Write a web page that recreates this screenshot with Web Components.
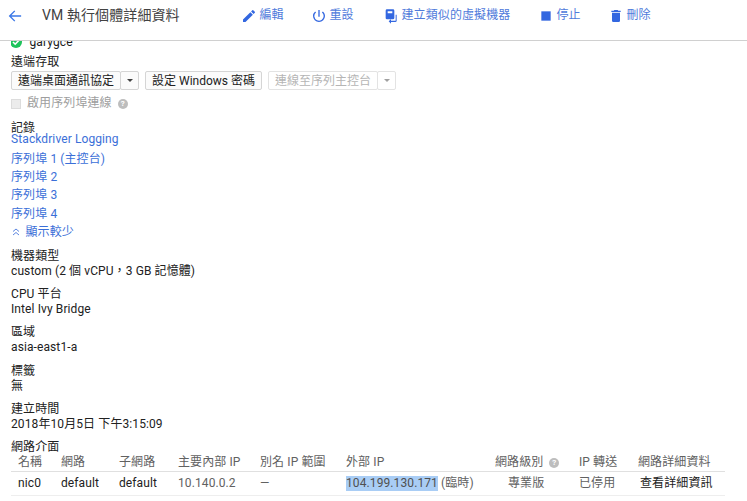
<!DOCTYPE html>
<html>
<head>
<meta charset="utf-8">
<style>
  html, body { margin: 0; padding: 0; height: 100%; background: #fff; }
  body { font: 12px/15px Roboto, "Noto Sans CJK TC", sans-serif; letter-spacing: .1px; color: #212121; overflow: hidden; }
</style>
</head>
<body>
<vm-header>
  <action-link icon="edit" style="width:70px">編輯</action-link>
  <action-link icon="reset" style="width:72px">重設</action-link>
  <action-link icon="clone" style="width:155px">建立類似的虛擬機器</action-link>
  <action-link icon="stop" style="width:70px">停止</action-link>
  <action-link icon="trash">刪除</action-link>
</vm-header>
<vm-details></vm-details>

<script>
const ICONS = {
  edit: '<path d="M3 17.25V21h3.75L17.81 9.94l-3.75-3.75L3 17.25zM20.71 7.04a1 1 0 0 0 0-1.41l-2.34-2.34a1 1 0 0 0-1.41 0l-1.83 1.83 3.75 3.75 1.83-1.83z"/>',
  reset: '<path d="M13 3h-2v10h2V3zm4.83 2.17-1.42 1.42A6.92 6.92 0 0 1 19 12a7 7 0 1 1-11.42-5.42L6.17 5.17A8.96 8.96 0 0 0 3 12a9 9 0 0 0 18 0c0-2.74-1.23-5.19-3.17-6.83z"/>',
  clone: '<path d="M6 2h9a2 2 0 0 1 2 2v11a2 2 0 0 1-2 2H6a2 2 0 0 1-2-2V4a2 2 0 0 1 2-2zm1 3v3h7V5H7zm12 5h1.5v9a2 2 0 0 1-2 2H12v2.5L8.5 20 12 17v2h7v-9z"/>',
  stop: '<path d="M5 5h14v14H5z"/>',
  trash: '<path d="M6 19a2 2 0 0 0 2 2h8a2 2 0 0 0 2-2V7H6v12zM19 4h-3.5l-1-1h-5l-1 1H5v2h14V4z"/>'
};

class ActionLink extends HTMLElement {
  constructor() {
    super();
    this.attachShadow({ mode: 'open' }).innerHTML = `
      <style>
        :host { display: flex; align-items: center; gap: 2.5px; color: #4f7bdb; font-size: 12px; white-space: nowrap; flex: none; box-sizing: border-box; }
        svg { width: 16px; height: 16px; fill: #3367e0; flex: none; }
      </style>
      <svg viewBox="0 0 24 24">${ICONS[this.getAttribute('icon')]}</svg>
      <slot></slot>`;
  }
}

class VmHeader extends HTMLElement {
  constructor() {
    super();
    this.attachShadow({ mode: 'open' }).innerHTML = `
      <style>
        :host { display: flex; align-items: center; height: 41px; box-sizing: border-box; border-bottom: 1px solid #d0d0d0; padding-bottom: 9px; }
        svg { width: 14px; height: 14px; margin-left: 8px; fill: #3b78e7; flex: none; }
        h1 { margin: 0 0 0 20px; width: 199px; font-size: 14px; font-weight: 400; color: #424242; white-space: nowrap; flex: none; }
        .actions { display: flex; align-items: center; }
      </style>
      <svg viewBox="0 0 16 16"><path d="M15 7.2H3.9l4.4-4.5-1.1-1.1L.8 8l6.4 6.4 1.1-1.1-4.4-4.5H15z"/></svg>
      <h1>VM 執行個體詳細資料</h1>
      <div class="actions"><slot></slot></div>`;
  }
}

class GcpButton extends HTMLElement {
  constructor() {
    super();
    this.attachShadow({ mode: 'open' }).innerHTML = `
      <style>
        :host { display: inline-flex; align-items: center; justify-content: center; height: 19px; box-sizing: border-box; border: 1px solid #d5d5d5; border-radius: 2px; background: #fbfbfb; color: #212121; font-size: 12px; letter-spacing: 0; white-space: nowrap; padding: 1px 6px 0; }
        :host([disabled]) { color: #b5b5b5; border-color: #e3e3e3; background: #fff; }
        :host([arrow]) { width: 19px; padding: 0; }
        i { border: 3px solid transparent; border-top-color: #424242; border-bottom: 0; }
        :host([disabled]) i { border-top-color: #a0a0a0; }
      </style>
      <slot></slot>${this.hasAttribute('arrow') ? '<i></i>' : ''}`;
  }
}

class DetailBlock extends HTMLElement {
  constructor() {
    super();
    this.attachShadow({ mode: 'open' }).innerHTML = `
      <style>
        :host { display: block; }
        .label { display: block; color: #212121; }
      </style>
      <span class="label">${this.getAttribute('label')}</span>
      <slot></slot>`;
  }
}

class HelpIcon extends HTMLElement {
  constructor() {
    super();
    this.attachShadow({ mode: 'open' }).innerHTML = `
      <style>
        :host { display: inline-block; width: 10px; height: 10px; border-radius: 50%; background: #bdbdbd; color: #fff; font: bold 8px/10px Roboto, sans-serif; text-align: center; }
      </style>?`;
  }
}

class VmDetails extends HTMLElement {
  constructor() {
    super();
    const logs = ['序列埠 1 (主控台)', '序列埠 2', '序列埠 3', '序列埠 4']
      .map(t => `<a>${t}</a>`).join('');
    this.attachShadow({ mode: 'open' }).innerHTML = `
      <style>
        :host { display: block; padding: 0 11px; height: 460px; overflow: hidden; }
        a { display: block; color: #3b6fd8; height: 18.4px; line-height: 18px; }
        .name { display: flex; align-items: flex-end; gap: 7.5px; height: 9px; overflow: hidden; margin-bottom: 4.5px; }
        .name span { flex: none; line-height: 15px; }
        .name svg { width: 12px; height: 12px; flex: none; margin: 0 0 2px -1px; }
        .buttons { display: flex; gap: 6px; margin-top: 1.5px; }
        .split { display: flex; }
        .split gcp-button + gcp-button { margin-left: -1px; }
        .serial { display: flex; align-items: center; gap: 6px; color: #9e9e9e; margin-top: 6px; height: 15px; }
        .serial b { width: 10px; height: 10px; background: #ececec; border: 1px solid #dcdcdc; box-sizing: border-box; }
        .logs { margin-top: 10.5px; }
        .log-label { height: 12px; line-height: 12px; }
        .logs a.first { margin-top: -1px; height: 17px; line-height: 12px; }
        .less { display: flex; align-items: center; gap: 5.5px; }
        .less svg { width: 8px; height: 8px; stroke: #5c86e0; fill: none; margin-left: 1px; }
        detail-block { margin-top: 8.2px; }
        .logs + detail-block { margin-top: 7.5px; }
        .nets { margin-right: 11px; }
      </style>
      <div class="name">
        <svg viewBox="0 0 12 12"><circle cx="6" cy="6" r="6" fill="#1fc35c"/><path d="M3 6l2.2 2.2L9.2 4" fill="none" stroke="#fff" stroke-width="1.6"/></svg>
        <span>garygce</span>
      </div>
      <div>遠端存取</div>
      <div class="buttons">
        <div class="split"><gcp-button>遠端桌面通訊協定</gcp-button><gcp-button arrow></gcp-button></div>
        <gcp-button>設定 Windows 密碼</gcp-button>
        <div class="split"><gcp-button disabled>連線至序列主控台</gcp-button><gcp-button disabled arrow></gcp-button></div>
      </div>
      <div class="serial"><b></b>啟用序列埠連線<help-icon></help-icon></div>
      <div class="logs">
        <div class="log-label">記錄</div>
        <a class="first">Stackdriver Logging</a>
        ${logs}
        <a class="less"><svg viewBox="0 0 8 8"><path d="M1 3.5 4 1l3 2.5M1 7l3-2.5L7 7"/></svg>顯示較少</a>
      </div>
      <detail-block label="機器類型">custom (2 個 vCPU，3 GB 記憶體)</detail-block>
      <detail-block label="CPU 平台">Intel Ivy Bridge</detail-block>
      <detail-block label="區域">asia-east1-a</detail-block>
      <detail-block label="標籤">無</detail-block>
      <detail-block label="建立時間">2018年10月5日 下午3:15:09</detail-block>
      <detail-block class="nets" label="網路介面"><network-table></network-table></detail-block>`;
  }
}

class NetworkTable extends HTMLElement {
  constructor() {
    super();
    this.attachShadow({ mode: 'open' }).innerHTML = `
      <style>
        :host { display: block; }
        .grid { display: grid; grid-template-columns: 43px 58px 59px 82px 86px 149px 84px 59px 1fr; }
        .grid > div { white-space: nowrap; padding-left: 7px; display: flex; align-items: center; box-sizing: border-box; }
        .head { height: 17px; color: #616161; border-bottom: 1px solid #e0e0e0; font-size: 12px; }
        .cell { height: 24px; border-bottom: 1px solid #eee; color: #616161; }
        .dark { color: #212121; }
        mark { background: #a9cdf5; color: #505050; }
        help-icon { margin-left: 6px; }
      </style>
      <div class="grid">
        <div class="head">名稱</div><div class="head">網路</div><div class="head">子網路</div>
        <div class="head">主要內部 IP</div><div class="head">別名 IP 範圍</div><div class="head">外部 IP</div>
        <div class="head">網路級別<help-icon></help-icon></div><div class="head">IP 轉送</div><div class="head">網路詳細資料</div>
        <div class="cell dark">nic0</div><div class="cell dark">default</div><div class="cell dark">default</div>
        <div class="cell">10.140.0.2</div><div class="cell">—</div>
        <div class="cell"><mark>104.199.130.171</mark>&nbsp;(臨時)</div>
        <div class="cell" style="padding-left:20px">專業版</div><div class="cell">已停用</div><div class="cell dark" style="padding-left:9px">查看詳細資訊</div>
      </div>`;
  }
}

customElements.define('action-link', ActionLink);
customElements.define('vm-header', VmHeader);
customElements.define('gcp-button', GcpButton);
customElements.define('detail-block', DetailBlock);
customElements.define('help-icon', HelpIcon);
customElements.define('network-table', NetworkTable);
customElements.define('vm-details', VmDetails);
</script>
</body>
</html>
